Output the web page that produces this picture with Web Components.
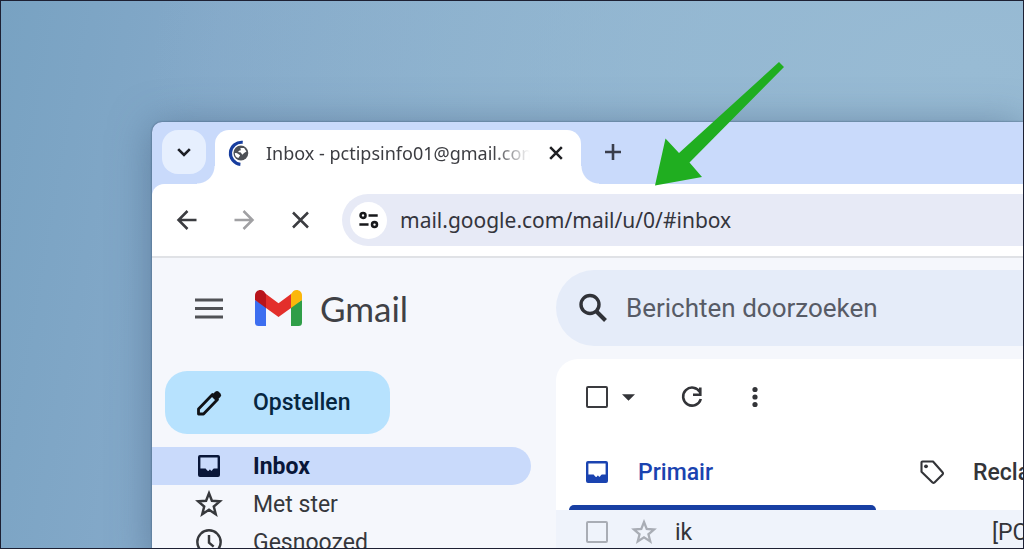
<!DOCTYPE html>
<html lang="nl">
<head>
<meta charset="utf-8">
<title>Gmail - Inbox</title>
<style>
body { margin: 0; font-family: Roboto, "Noto Sans", sans-serif; color: #333438; }
</style>
</head>
<body>
<desktop-scene>
  <browser-window>
    <tab-strip slot="tabs" label="Inbox - pctipsinfo01@gmail.com"></tab-strip>
    <address-toolbar slot="toolbar" address="mail.google.com/mail/u/0/#inbox"></address-toolbar>
    <mail-app>
      <mail-brand slot="brand"></mail-brand>
      <mail-search slot="search" hint="Berichten doorzoeken"></mail-search>
      <mail-nav slot="nav">
        <nav-item icon="inbox" active>Inbox</nav-item>
        <nav-item icon="star">Met ster</nav-item>
        <nav-item icon="clock">Gesnoozed</nav-item>
      </mail-nav>
      <mail-panel slot="panel">
        <category-tab slot="category" icon="inbox" active>Primair</category-tab>
        <category-tab slot="category" icon="tag">Reclame</category-tab>
        <mail-row sender="ik">[PCtips]</mail-row>
      </mail-panel>
    </mail-app>
  </browser-window>
</desktop-scene>

<script>
const ICONS = {
  chevron: ['0 0 24 24', '<path d="M5 8.500l7 7 7-7" fill="none" stroke="currentColor" stroke-width="3.200"/>'],
  favicon: ['0 0 28 28', '<path d="M18 2.500A11.800 11.800 0 1 0 15.500 26.300" fill="none" stroke="#173d9e" stroke-width="3.400"/><circle cx="16" cy="14" r="8" fill="#4d5056"/><path d="M9.500 14c2 0 3 .5 4.500 1.500s1.500 1.500 0 2.500l-.5 1.500C11 19 9.500 17 9.500 14zM15.500 8.500h4l2.500 4-2.500 1.500-2 2-1.500-2.500-3-.5 1-1.500 2-.5z" fill="#fff"/>'],
  close: ['0 0 24 24', '<path d="M5 5l14 14M19 5L5 19" fill="none" stroke="currentColor" stroke-width="3"/>'],
  plus: ['0 0 28 28', '<path d="M14 6v16M6 14h16" fill="none" stroke="currentColor" stroke-width="2.600"/>'],
  back: ['0 0 32 32', '<path d="M25.500 16H8M16.500 7L7.500 16l9 9" fill="none" stroke="currentColor" stroke-width="2.500"/>'],
  forward: ['0 0 32 32', '<path d="M7.500 16H25M16.500 7l9 9-9 9" fill="none" stroke="currentColor" stroke-width="2.500"/>'],
  stop: ['0 0 32 32', '<path d="M10 8.500l15 15M25 8.500l-15 15" fill="none" stroke="currentColor" stroke-width="2.500"/>'],
  tune: ['0 0 24 24', '<g fill="none" stroke="currentColor" stroke-width="2.800"><circle cx="5.500" cy="7" r="2.700"/><path d="M11.500 7h10M1.500 17h10"/><circle cx="18" cy="17" r="2.700"/></g>'],
  menu: ['0 0 32 32', '<path d="M2 8h28M2 16.500h28M2 25h28" stroke="currentColor" stroke-width="2.900"/>'],
  gmail: ['0 0 47 36', '<path d="M0 10v22.500Q0 36 3.500 36H11V16z" fill="#3c6ef0"/><path d="M36 16v20h7.500q3.500 0 3.500-3.500V10z" fill="#2f9e48"/><path d="M36 4v14L47 10V5.500C47 .8 41.800-1.500 38.200 1.200z" fill="#fbb70b"/><path d="M11 18V4l12.500 9.200L36 4v14l-12.500 9z" fill="#e32f2b"/><path d="M0 5.500V10l11 8V4L8.800 1.200C5.200-1.500 0 .8 0 5.500z" fill="#b8141b"/>'],
  search: ['0 0 32 32', '<circle cx="13" cy="12.500" r="9" fill="none" stroke="currentColor" stroke-width="3.400"/><path d="M19 19l9.500 9.500" stroke="currentColor" stroke-width="4"/>'],
  pencil: ['0 0 28 28', '<path d="M3.500 20v5h5L22.500 10.500l-5-5z" fill="none" stroke="currentColor" stroke-width="2.800" stroke-linejoin="round"/><path d="M16 7l4.200-4.200a2.600 2.600 0 0 1 3.600 0l1.600 1.600a2.600 2.600 0 0 1 0 3.600L21 12z" fill="currentColor"/>'],
  inbox: ['0 0 24 24', '<path fill-rule="evenodd" d="M3 1h18a2 2 0 0 1 2 2v18a2 2 0 0 1-2 2H3a2 2 0 0 1-2-2V3a2 2 0 0 1 2-2zM3.400 3.400V14.500H8c.8 0 1 .5 1.600 1.200l1 1.100q.6.500 1.100-.1l.8-.9q.4-.4.8 0l.6.700q.6.500 1.100-.1l.7-.8c.4-.7.800-1.100 1.500-1.100h3.400V3.400z" fill="currentColor"/>'],
  star: ['0 0 24 24', '<path d="M12 2.800l2.500 6.400 6.800.5-5.200 4.400 1.700 6.700L12 17l-5.800 3.800 1.700-6.700-5.200-4.400 6.800-.5z" fill="none" stroke="currentColor" stroke-width="2.100"/>'],
  clock: ['0 0 24 24', '<g fill="none" stroke="currentColor" stroke-width="2.100"><circle cx="12" cy="12" r="10"/><path d="M12 6v6.500l4 3.500"/></g>'],
  arrow: ['0 0 14 8', '<path d="M0 1h14L7 8z" fill="currentColor"/>'],
  refresh: ['0 0 28 28', '<path d="M22 9.200A9 9 0 1 0 22.800 16" fill="none" stroke="currentColor" stroke-width="2.600"/><path d="M22.300 4.500v7.300H15" fill="none" stroke="currentColor" stroke-width="2.600"/>'],
  more: ['0 0 28 28', '<g fill="currentColor"><circle cx="14" cy="6.500" r="2.600"/><circle cx="14" cy="14" r="2.600"/><circle cx="14" cy="21.500" r="2.600"/></g>'],
  tag: ['0 0 24 24', '<path d="M1.500 2.500v9.300l11 10.700q1 .8 2 0l8-8q1-1 0-2.200L13 1.500H2.500q-1 0-1 1z" fill="none" stroke="currentColor" stroke-width="2.100" stroke-linejoin="round"/><circle cx="6" cy="6.300" r="1.900" fill="currentColor"/>']
};

/* Base class: clones the class's own markup and styles into an open shadow root. */
class Base extends HTMLElement {
  constructor() {
    super();
    this.attachShadow({ mode: 'open' });
  }
  connectedCallback() {
    const t = document.createElement('template');
    t.innerHTML = `<style>
      *, ::before, ::after { box-sizing: border-box; }
      :host { box-sizing: border-box; display: block; }
      button { display: flex; align-items: center; justify-content: center; border: 0; padding: 0; margin: 0;
        background: none; color: inherit; font: inherit; cursor: pointer; flex: none; }
      input { font: inherit; color: inherit; margin: 0; }
      ${this.css()}</style>${this.html()}`;
    this.shadowRoot.replaceChildren(t.content.cloneNode(true));
  }
  css() { return ''; }
  html() { return '<slot></slot>'; }
  attr(name) { return this.getAttribute(name) || ''; }
}

customElements.define('ui-icon', class extends Base {
  css() { return `:host { width: var(--w, 24px); height: var(--h, var(--w, 24px)); flex: none; }
    svg { display: block; width: 100%; height: 100%; }`; }
  html() {
    const [box, body] = ICONS[this.attr('name')];
    return `<svg viewBox="${box}" aria-hidden="true">${body}</svg>`;
  }
});

customElements.define('desktop-scene', class extends Base {
  css() { return `
    :host { position: relative; height: 100vh; overflow: hidden; border: 1px solid #1d2033;
      padding: 121px 0 0 151px;
      background:
        radial-gradient(ellipse at 95% 12%, #98bbd4 0, #98bbd400 60%),
        linear-gradient(100deg, #78a2c2 0, #84a9c9 20%, #8db2ce 60%, #92b5d0 100%); }
    svg { position: absolute; left: 654px; top: 60px; width: 130px; height: 126px; }`; }
  html() { return `<slot></slot>
    <svg viewBox="0 0 130 126" aria-hidden="true"><path d="M124 1l5 5-94.500 95.500L47 116 0 124.500l10.500-47L24 92z" fill="#20ae20"/></svg>`; }
});

customElements.define('browser-window', class extends Base {
  css() { return `:host { background: #c9dafb; border-radius: 10px 0 0 0; overflow: clip;
      min-height: 100%; box-shadow: 0 0 2px #38506f, 0 4px 40px #3d597888; }`; }
  html() { return `<slot name="tabs"></slot><slot name="toolbar"></slot><slot></slot>`; }
});

customElements.define('tab-strip', class extends Base {
  css() { return `
    :host { display: flex; height: 62px; padding: 8px 0 0 10px; }
    .list { width: 44px; height: 44px; border-radius: 16px; background: #e6effe; color: #1d1f26; --w: 20px; }
    .tab { position: relative; display: flex; align-items: center; width: 366px; height: 54px;
      margin-left: 9px; padding: 0 13px 8px 11px; border-radius: 14px 14px 0 0; background: #fff; }
    .tab::before, .tab::after { content: ""; position: absolute; bottom: 0; width: 18px; height: 18px; }
    .tab::before { right: 100%; background: radial-gradient(circle at 0 0, transparent 17px, #fff 18px); }
    .tab::after { left: 100%; background: radial-gradient(circle at 100% 0, transparent 17px, #fff 18px); }
    .title { flex: 1; margin: 0 14px; overflow: hidden; white-space: nowrap; font: 18px/28px "Noto Sans", sans-serif;
      color: #3c3d42; mask-image: linear-gradient(90deg, #000 86%, transparent); }
    ui-icon[name=favicon] { --w: 26px; }
    .close { width: 24px; height: 24px; color: #1f2023; --w: 20px; }
    .new { width: 28px; height: 28px; margin: 8px 0 0 18px; color: #3a3e4b; --w: 28px; }`; }
  html() { return `
    <button class="list" aria-label="Tabbladen zoeken"><ui-icon name="chevron"></ui-icon></button>
    <div class="tab"><ui-icon name="favicon"></ui-icon><span class="title">${this.attr('label')}</span>
      <button class="close" aria-label="Sluiten"><ui-icon name="close"></ui-icon></button></div>
    <button class="new" aria-label="Nieuw tabblad"><ui-icon name="plus"></ui-icon></button>`; }
});

customElements.define('address-toolbar', class extends Base {
  css() { return `
    :host { display: flex; align-items: center; gap: 27px; padding: 10px 0 10px 19px; background: #fff;
      border-radius: 12px 0 0 0; border-bottom: 2px solid #e0e2e6; color: #3b3c40; }
    .history { display: flex; gap: 24px; --w: 32px; }
    [disabled] { color: #a0a0a3; }
    .bar { flex: 1; display: flex; align-items: center; gap: 13px; height: 52px; padding-left: 8px;
      border-radius: 26px 0 0 26px; background: #e7eaf6; }
    .site { width: 37px; height: 37px; border-radius: 50%; background: #fff; color: #17181b; --w: 22px; }
    input { flex: 1; min-width: 0; border: 0; padding: 0; background: none; outline: 0; color: #34353d;
      font: 21px/32px "Noto Sans", sans-serif; }`; }
  html() { return `
    <div class="history">
      <button aria-label="Terug"><ui-icon name="back"></ui-icon></button>
      <button aria-label="Vooruit" disabled><ui-icon name="forward"></ui-icon></button>
      <button aria-label="Laden stoppen"><ui-icon name="stop"></ui-icon></button>
    </div>
    <div class="bar">
      <button class="site" aria-label="Sitegegevens"><ui-icon name="tune"></ui-icon></button>
      <input type="text" aria-label="Adres" value="${this.attr('address')}">
    </div>`; }
});

customElements.define('mail-app', class extends Base {
  css() { return `
    :host { display: grid; grid-template-columns: 404px 1fr; grid-template-rows: 76px auto; row-gap: 13px;
      padding-top: 12px; background: #f5f7fc; }`; }
  html() { return `<slot name="brand"></slot><slot name="search"></slot><slot name="nav"></slot><slot name="panel"></slot>`; }
});

customElements.define('mail-brand', class extends Base {
  css() { return `
    :host { display: flex; align-items: center; padding-left: 41px; }
    button { --w: 32px; color: #505256; }
    a { display: flex; align-items: center; gap: 18px; margin-left: 30px; color: #3f4146; text-decoration: none;
      font: 35px/44px Lato, sans-serif; }
    a ui-icon { --w: 47px; --h: 36px; }`; }
  html() { return `<button aria-label="Hoofdmenu"><ui-icon name="menu"></ui-icon></button>
    <a href="#inbox"><ui-icon name="gmail"></ui-icon><span>Gmail</span></a>`; }
});

customElements.define('mail-search', class extends Base {
  css() { return `
    :host { display: flex; align-items: center; gap: 17px; padding-left: 21px; border-radius: 38px 0 0 38px; background: #e5ecf9; }
    button { --w: 32px; color: #303238; }
    input { flex: 1; min-width: 0; border: 0; padding: 0; outline: 0; background: none; font-size: 26px; line-height: 36px; }
    input::placeholder { color: #575b66; opacity: 1; }`; }
  html() { return `<button aria-label="Zoeken"><ui-icon name="search"></ui-icon></button>
    <input type="text" aria-label="${this.attr('hint')}" placeholder="${this.attr('hint')}">`; }
});

customElements.define('mail-nav', class extends Base {
  css() { return `
    :host { padding-top: 12px; }
    button { width: 225px; height: 63px; margin: 0 0 13px 13px; padding-left: 30px; gap: 30px; justify-content: flex-start;
      border-radius: 22px; background: #b7e2fe; color: #06263f; font-size: 23px; font-weight: 500; --w: 28px; }
    ui-icon { color: #111216; }
    nav { display: block; }`; }
  html() { return `<button><ui-icon name="pencil"></ui-icon>Opstellen</button><nav><slot></slot></nav>`; }
});

customElements.define('nav-item', class extends Base {
  css() { return `
    :host { margin-right: 25px; }
    a { display: flex; align-items: center; gap: 30px; height: 38px; padding-left: 43px; color: #36383c;
      font-size: 23px; text-decoration: none; border-radius: 0 19px 19px 0; --w: 28px; }
    ui-icon[name=inbox] { --w: 24px; margin: 0 2px; }
    :host([active]) a { background: #c9dafb; color: #091638; font-weight: 700; }`; }
  html() { return `<a href="#"><ui-icon name="${this.attr('icon')}"></ui-icon><span><slot></slot></span></a>`; }
});

customElements.define('mail-panel', class extends Base {
  css() { return `
    :host { background: #fff; border-radius: 22px 0 0 0; overflow: hidden; min-width: 0; }
    .tools { display: flex; align-items: center; height: 75px; padding-left: 30px; color: #333438; }
    input { appearance: none; flex: none; width: 22px; height: 22px; border: 2px solid #3a3b3f; border-radius: 2px; }
    .arrow { margin-left: 14px; --w: 13px; --h: 8px; }
    .refresh { margin-left: 43px; --w: 28px; }
    .more { margin-left: 35px; --w: 28px; }
    .tabs { display: flex; height: 76px; }`; }
  html() { return `
    <div class="tools"><input type="checkbox" aria-label="Selecteren">
      <button class="arrow" aria-label="Selectieopties"><ui-icon name="arrow"></ui-icon></button>
      <button class="refresh" aria-label="Vernieuwen"><ui-icon name="refresh"></ui-icon></button>
      <button class="more" aria-label="Meer"><ui-icon name="more"></ui-icon></button></div>
    <div class="tabs"><slot name="category"></slot></div><slot></slot>`; }
});

customElements.define('category-tab', class extends Base {
  css() { return `
    :host { position: relative; flex: none; width: 335px; }
    button { width: 100%; height: 100%; padding-left: 29px; gap: 29px; justify-content: flex-start;
      font-size: 23px; font-weight: 500; --w: 24px; }
    :host([active]) { color: #1a43b0; }
    :host([active]) button::after { content: ""; position: absolute; left: 13px; right: 15px; bottom: 0; height: 5px;
      border-radius: 5px 5px 0 0; background: #183fa3; }`; }
  html() { return `<button><ui-icon name="${this.attr('icon')}"></ui-icon><span><slot></slot></span></button>`; }
});

customElements.define('mail-row', class extends Base {
  css() { return `
    :host { display: flex; align-items: center; height: 44px; padding-left: 30px; background: #eff3fb;
      font-size: 23px; white-space: nowrap; }
    input { appearance: none; flex: none; width: 22px; height: 22px; border: 2px solid #a9adb5; border-radius: 2px; }
    button { margin: 0 18px 0 23px; color: #a9adb5; --w: 26px; }
    .from { width: 317px; flex: none; }`; }
  html() { return `<input type="checkbox" aria-label="Bericht selecteren">
    <button aria-label="Ster"><ui-icon name="star"></ui-icon></button>
    <span class="from">${this.attr('sender')}</span><span><slot></slot></span>`; }
});
</script>
</body>
</html>
